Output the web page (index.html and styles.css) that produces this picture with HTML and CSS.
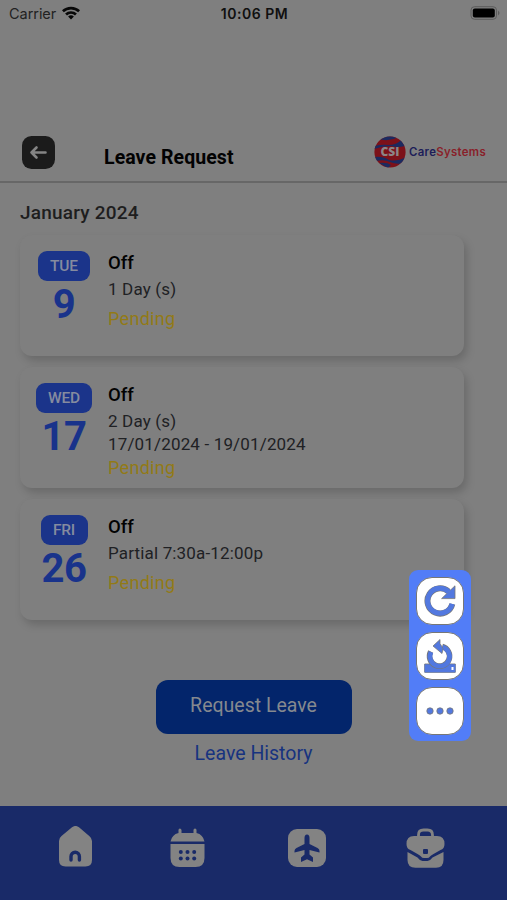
FILE: index.html
```html
<!DOCTYPE html>
<html lang="en">
<head>
<meta charset="utf-8">
<title>Leave Request</title>
<link rel="stylesheet" href="styles.css">
</head>
<body>
<div class="status">
  <div class="carrier">Carrier
    <svg width="20" height="15" viewBox="0 0 20 15"><path d="M1 5.3a13 13 0 0 1 18 0l-1.8 2a10.4 10.4 0 0 0-14.4 0zM4.1 8.5a8.6 8.6 0 0 1 11.8 0L14 10.4a6 6 0 0 0-8 0zM7.1 11.5a4.4 4.4 0 0 1 5.8 0L10 14.4z"/></svg>
  </div>
  <div class="clock">10:06 PM</div>
  <svg class="battery" width="31" height="14" viewBox="0 0 31 14"><rect x="1" y=".7" width="25.5" height="12.6" rx="3.5" fill="none" stroke="#5c5c5c"/><rect x="2.8" y="2.5" width="22" height="9" rx="2" fill="#000"/><path d="M28 4.500q3 2.500 0 5z" fill="#5c5c5c"/></svg>
</div>
<header class="header">
  <svg class="back" width="33" height="33" viewBox="0 0 33 33"><rect width="33" height="33" rx="9.5" fill="#1b1b1b"/><path d="M23.5 16.5H9.5M14.5 11.5l-5 5 5 5" fill="none" stroke="#858585" stroke-width="2.6" stroke-linecap="round" stroke-linejoin="round"/></svg>
  <h1>Leave Request</h1>
  <div class="logo">
    <svg width="32" height="32" viewBox="0 0 32 32"><defs><clipPath id="globe"><circle cx="16" cy="16" r="15.6"/></clipPath></defs><g clip-path="url(#globe)"><rect width="32" height="32" fill="#7c1119"/><path d="M4 3Q15 6 25 1L20-1H8zM0 10q9-2 14-1 9 0 13-5l4 6q-8 2-14 0-9 0-17 3zM0 21q9-1 15 3 8 2 17-3l-2 6q-7 2-14-1-6-3-14-1zM5 27q8-1 12 2l-3 3z" fill="#1b2a60"/></g><text x="16" y="20.200" text-anchor="middle">CSI</text></svg>
    <div class="brand"><span>Care</span>Systems</div>
  </div>
</header>
<main>
  <h2>January 2024</h2>
  <section class="cards">
    <article class="card">
      <div class="date"><span class="day tue">TUE</span><b>9</b></div>
      <div class="info"><h3>Off</h3><p>1 Day (s)</p><p class="pending spaced">Pending</p></div>
    </article>
    <article class="card">
      <div class="date"><span class="day wed">WED</span><b>17</b></div>
      <div class="info"><h3>Off</h3><p>2 Day (s)</p><p>17/01/2024 - 19/01/2024</p><p class="pending">Pending</p></div>
    </article>
    <article class="card">
      <div class="date"><span class="day fri">FRI</span><b>26</b></div>
      <div class="info"><h3>Off</h3><p>Partial 7:30a-12:00p</p><p class="pending spaced">Pending</p></div>
    </article>
  </section>
  <div class="actions">
    <button>Request Leave</button>
    <a>Leave History</a>
  </div>
</main>
<nav>
  <svg width="34" height="44" viewBox="0 0 34 44"><path fill-rule="evenodd" d="M13 1.200q3.500-2.500 7 0l10.500 9Q33 12.200 33 15v19q0 6.500-6.500 6.500h-20Q0 40.500 0 34V15q0-3 2.500-5zM10.300 34V30.500a5.900 5.900 0 0 1 11.800 0V34a1.700 1.700 0 0 1-3.400 0v-3.500a2.500 2.500 0 0 0-5 0V34a1.700 1.700 0 0 1-3.400 0z"/></svg>
  <svg width="35" height="44" viewBox="0 0 34 44"><path d="M8 7V4q0-1.500 1.400-1.500T11 4v3h12V4q0-1.500 1.500-1.500T26 4v3q6.500 1.500 8 8.500H0Q1.500 8.500 8 7z"/><path d="M0 18h34v14q0 9-9 9H9q-9 0-9-9z"/><g class="dots"><circle cx="10.300" cy="26" r="2"/><circle cx="17" cy="26" r="2"/><circle cx="23.700" cy="26" r="2"/><circle cx="10.300" cy="32.500" r="2"/><circle cx="17" cy="32.500" r="2"/><circle cx="23.700" cy="32.500" r="2"/></g></svg>
  <svg width="38" height="44" viewBox="0 0 38 44"><rect y="3" width="38" height="38" rx="9"/><path class="cut" d="M19 8.500q2.500 0 2.500 3.500v6l8 4q2 1 2 3v1.500l-10-2.500v4.500l3.500 3v4.500L19 33.300 13 36v-4.500l3.500-3V24l-10 2.500V25q0-2 2-3l8-4v-6q0-3.500 2.500-3.500z"/></svg>
  <svg width="39" height="44" viewBox="0 0 39 44"><path d="M12.500 12V9q0-5 5-5h4q5 0 5 5v3" fill="none" stroke="#838383" stroke-width="2.800"/><path d="M8 10h23q7.500 0 7.500 8 0 5-4 6l-7 4q-3 1.500-3.500 2.500-1 1.500-3 1.500h-3q-2 0-3-1.500-.5-1-3.500-2.500l-7-4q-4-1-4-6 0-8 7.500-8z"/><path d="M1.500 26l10 5.500q2.500 3.500 5 3.500h5q2.500 0 5-3.500l11-5.500v8q0 7.800-7.500 7.800H9.500q-8 0-8-7.800z"/><rect class="cut" x="17" y="23" width="5" height="5" rx="1"/></svg>
</nav>
<aside class="tools">
  <div class="tool"><svg width="32" height="32" viewBox="0 0 32 32"><path d="M28.300 19A12.600 12.600 0 1 1 24.500 6.600" fill="none" stroke="#777" stroke-width="6"/><path d="M31 .8v12.800H17.600z" fill="#5278df" stroke="#777" stroke-width=".8"/><path d="M28.200 18.800A12.500 12.500 0 1 1 25 7" fill="none" stroke="#5278df" stroke-width="5"/></svg></div>
  <div class="tool"><svg width="32" height="34" viewBox="0 0 32 34"><path d="M.7 25h30.600v8.300H.7z" fill="#5278df" stroke="#777" stroke-width=".9"/><circle cx="15.500" cy="17" r="12.500" fill="#fff"/><path d="M.7 25.500q3 .5 6 0Q15.500 32 25 25.500h6.300v7.800H.7z" fill="#5278df"/><path d="M6.700 12.500a10 10 0 1 0 11.500-5" fill="none" stroke="#777" stroke-width="5.600"/><path d="M7 13a9.800 9.800 0 1 0 11.500-5" fill="none" stroke="#5278df" stroke-width="4.700"/><path d="M9 7l7-6.500v4l3 5-1 5z" fill="#5278df" stroke="#777" stroke-width=".8"/><rect x="27.500" y="28" width="2" height="3" fill="#fff"/></svg></div>
  <div class="tool"><svg width="28" height="8" viewBox="0 0 28 8" fill="#5278df" stroke="#777" stroke-width=".8"><circle cx="4" cy="4" r="3.200"/><circle cx="14" cy="4" r="3.200"/><circle cx="24" cy="4" r="3.200"/></svg></div>
</aside>
</body>
</html>
```
FILE: styles.css
```css
* { box-sizing: border-box; }
body { margin: 0; width: 507px; height: 900px; overflow: hidden; position: relative; display: flex; flex-direction: column; background: #7f7f7f; font-family: Roboto, "Liberation Sans", sans-serif; color: #202124; }
h1, h2, h3, p { margin: 0; font-weight: 400; }
svg { display: block; flex: none; }
.status { height: 28px; padding: 0 7px 0 9px; display: grid; grid-template-columns: 1fr auto 1fr; align-items: center; font-family: Inter, sans-serif; font-size: 14.5px; }
.carrier { display: flex; align-items: center; gap: 5px; color: #222; letter-spacing: -.05px; margin-top: -1px; }
.carrier svg { margin-top: -3px; fill: #080808; }
.clock { font-size: 14px; font-weight: 600; color: #101010; letter-spacing: .5px; margin-top: -1px; }
.battery { justify-self: end; margin: -2px -1px 0 0; }
.header { height: 155px; padding: 108px 21px 0 22px; display: flex; align-items: flex-start; border-bottom: 2px solid #676767; }
.header h1 { margin: 11px 0 0 49px; line-height: 22px; font-size: 19.5px; font-weight: 700; color: #020202; white-space: nowrap; letter-spacing: .08px; }
.logo { margin: 0 0 0 auto; display: flex; align-items: center; gap: 3px; }
.logo text { font: 800 12px "Open Sans", sans-serif; fill: #8c8587; }
.brand { font: 600 11.400px Inter, sans-serif; color: #891f2a; letter-spacing: .32px; }
.brand span { color: #1c1d58; }
main { flex: 1; }
h2 { margin: 18px 0 0 20px; line-height: 24px; font-size: 19px; font-weight: 500; color: #1e1e1e; letter-spacing: .2px; }
.cards { margin: 10px 0 0 20px; width: 444px; display: grid; gap: 11px; }
.card { height: 121px; border-radius: 12px; background: #7f7f7f; box-shadow: 3px 5px 8px rgba(0,0,0,.17); display: grid; grid-template-columns: 88px 1fr; }
.date { padding-top: 16px; display: flex; flex-direction: column; align-items: center; }
.day { height: 30px; border-radius: 9px; background: #1b348a; color: #858b9f; font-size: 15.500px; font-weight: 500; line-height: 31px; text-align: center; letter-spacing: -.15px; }
.tue { width: 52px; } .wed { width: 56px; } .fri { width: 47px; }
.date b { margin-top: 2px; font-size: 40px; line-height: 44px; color: #19338b; letter-spacing: -.4px; }
.info { padding-top: 15px; }
.info h3 { font-size: 18.500px; font-weight: 500; line-height: 26px; color: #020202; }
.info p { font-size: 17px; line-height: 23px; letter-spacing: .16px; margin-top: 2px; }
.info p + p { margin-top: 0; }
.info .pending { color: #927a16; font-size: 18px; line-height: 24px; letter-spacing: .3px; }
.info p.spaced { margin-top: 6px; }
.actions { margin-top: 60px; display: flex; flex-direction: column; align-items: center; }
button { width: 196px; height: 54px; border: 0; border-radius: 12px; background: #03256b; color: #85898f; font: 400 19.500px/50px Roboto, sans-serif; padding: 0 0 2px; letter-spacing: 0; }
.actions a { margin-top: 8px; line-height: 24px; font-size: 19.500px; color: #17337f; }
nav { height: 94px; padding: 20px 62px 0 59px; display: grid; grid-template-columns: 111px 118px 118px 39px; align-items: start; background: #192a68; fill: #838383; }
nav .dots, nav .cut { fill: #192a68; }
.tools { position: absolute; left: 409px; top: 570px; width: 62px; height: 171px; border-radius: 9px; background: #527df7; padding-top: 7px; display: flex; flex-direction: column; align-items: center; gap: 7px; }
.tool { width: 48px; height: 48px; border: 1px solid #777; border-radius: 16px; background: #fff; display: grid; place-items: center; }
```
